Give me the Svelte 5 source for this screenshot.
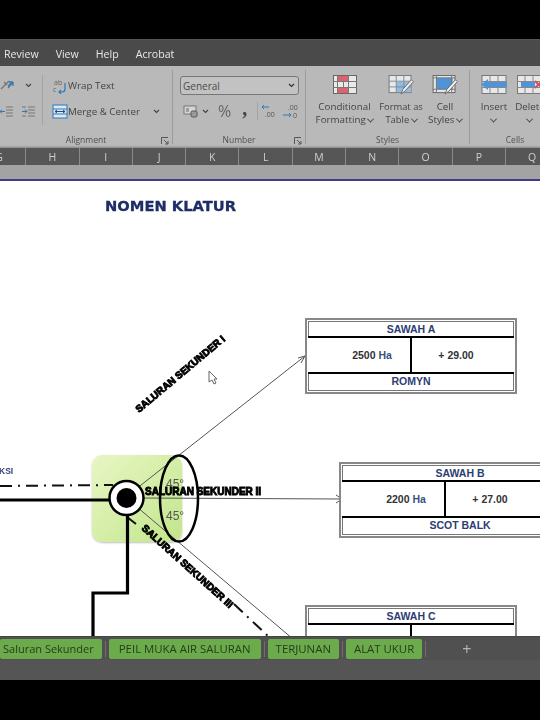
<script>
  const menus = ['Review', 'View', 'Help', 'Acrobat'];
  const cols = ['G', 'H', 'I', 'J', 'K', 'L', 'M', 'N', 'O', 'P', 'Q'];
  const tabs = ['Saluran Sekunder', 'PEIL MUKA AIR SALURAN', 'TERJUNAN', 'ALAT UKUR'];
  const sawah = [
    { cls: 'a', name: 'SAWAH A', area: '2500', level: '+ 29.00', type: 'ROMYN' },
    { cls: 'b', name: 'SAWAH B', area: '2200', level: '+ 27.00', type: 'SCOT BALK' },
    { cls: 'c', name: 'SAWAH C', area: '', level: '', type: '' }
  ];
</script>

<div class="screen">
  <div class="bar-black top"></div>

  <div class="menu">
    {#each menus as m}
      <span>{m}</span>
    {/each}
  </div>

  <div class="ribbon">
    <section class="group align">
      <div class="align-body">
        <div class="align-icons">
          <div class="icon-row">
            <svg width="22" height="16" viewBox="0 0 22 16"><path d="M1 12 L9 4 M4 5l3 3M8 9l3-3" stroke="#777" fill="none" stroke-width="1.4"/><path d="M8 11 L13 5M13 5h-4M13 5v4" stroke="#2f78b8" fill="none" stroke-width="1.3"/></svg>
            <svg class="chev" width="7" height="5" viewBox="0 0 7 5"><path d="M1 1l2.500 2.500L6 1" stroke="#444" fill="none" stroke-width="1.100"/></svg>
          </div>
          <div class="icon-row two">
            <svg width="13" height="11" viewBox="0 0 13 11"><path d="M6 1h7M6 4h7M6 7h7M6 10h7" stroke="#777"/><path d="M5 5.500H0M2 3.500l-2 2 2 2" stroke="#2f78b8" fill="none"/></svg>
            <svg width="13" height="11" viewBox="0 0 13 11"><path d="M6 1h7M6 4h7M6 7h7M6 10h7M0 1h4M0 10h4" stroke="#777"/><path d="M0 5.500h5M3 3.500l2 2-2 2" stroke="#2f78b8" fill="none"/></svg>
          </div>
        </div>
        <div class="divider"></div>
        <div class="wrap-col">
          <div class="cmd">
            <svg width="16" height="16" viewBox="0 0 16 16"><text x="2" y="7" class="ab">ab</text><text x="1" y="14" class="ab">c</text><path d="M13 5v6a3 3 0 0 1-3 3H7M9 12l-2 2 2 2" stroke="#2f78b8" fill="none" stroke-width="1.200"/></svg>
            <span>Wrap Text</span>
          </div>
          <div class="cmd">
            <svg width="16" height="15" viewBox="0 0 16 15"><rect x="1" y="1" width="14" height="13" fill="#dce9f4" stroke="#2f78b8"/><path d="M1 5h14M1 10h14" stroke="#2f78b8"/><path d="M3 7.500h10M5 6l-2 1.500L5 9M11 6l2 1.500L11 9" stroke="#1f4f80" fill="none"/></svg>
            <span>Merge &amp; Center</span>
            <svg class="chev merge-chev" width="7" height="5" viewBox="0 0 7 5"><path d="M1 1l2.500 2.500L6 1" stroke="#444" fill="none" stroke-width="1.100"/></svg>
          </div>
        </div>
      </div>
      <div class="caption">
        <span>Alignment</span>
        <svg class="launch" width="8" height="8" viewBox="0 0 8 8"><path d="M.5 7V.5H7M3 3l4 4M7 4v3H4" stroke="#555" fill="none"/></svg>
      </div>
    </section>

    <section class="group number">
      <div class="select"><span>General</span><svg width="7" height="5" viewBox="0 0 7 5"><path d="M1 1l2.500 2.500L6 1" stroke="#333" fill="none" stroke-width="1.200"/></svg></div>
      <div class="num-row">
        <svg width="16" height="14" viewBox="0 0 16 14"><rect x="1" y="2" width="12" height="8" fill="#d5d5d5" stroke="#777"/><rect x="8" y="7" width="6" height="6" rx="1.500" fill="#9a9a9a" stroke="#555"/><path d="M3 5h3M3 7h3" stroke="#666"/></svg>
        <svg class="chev" width="7" height="5" viewBox="0 0 7 5"><path d="M1 1l2.500 2.500L6 1" stroke="#444" fill="none" stroke-width="1.100"/></svg>
        <span class="pct">%</span>
        <span class="comma">,</span>
        <i class="mini-sep"></i>
        <svg width="16" height="14" viewBox="0 0 16 14"><path d="M8 3H1M3 1L1 3l2 2" stroke="#2f78b8" fill="none"/><text x="4" y="13" class="dec">.00</text></svg>
        <svg class="dec-more" width="16" height="16" viewBox="0 0 16 16"><text x="5" y="7" class="dec">.00</text><path d="M0 12h8M6 10l2 2-2 2" stroke="#2f78b8" fill="none"/><text x="10" y="15" class="dec">0</text></svg>
      </div>
      <div class="caption">
        <span>Number</span>
        <svg class="launch" width="8" height="8" viewBox="0 0 8 8"><path d="M.5 7V.5H7M3 3l4 4M7 4v3H4" stroke="#555" fill="none"/></svg>
      </div>
    </section>

    <section class="group styles">
      <div class="big-row">
        <div class="big cond">
          <svg width="24" height="20" viewBox="0 0 24 20"><rect x=".5" y=".5" width="23" height="18" fill="#e9e9e9" stroke="#666"/><rect x="4" y="1" width="11" height="6" fill="#d9646e"/><rect x="4" y="12" width="11" height="6" fill="#d9646e"/><path d="M0 6.500h24M0 12.500h24M4.500 0v19M10.500 7v5M15.500 0v19" stroke="#777"/></svg>
          <span>Conditional<br />Formatting <b class="v"></b></span>
        </div>
        <div class="big table">
          <svg width="26" height="20" viewBox="0 0 26 21"><rect x=".5" y=".5" width="23" height="18" fill="#e4e9ee" stroke="#777"/><rect x="8" y="7" width="15" height="11" fill="#8dbde6"/><path d="M0 6.500h24M0 12.500h24M8 0v19M16 0v19" stroke="#888"/><path d="M13 20l2-5 9-10 2 2-9 10z" fill="#f2f2f2" stroke="#666"/></svg>
          <span>Format as<br />Table <b class="v"></b></span>
        </div>
        <div class="big cell">
          <svg width="26" height="20" viewBox="0 0 26 21"><rect x=".5" y=".5" width="23" height="18" fill="#e4e4e4" stroke="#666"/><rect x="4" y="3" width="17" height="12" fill="#4f94d8"/><path d="M4 0v19M20 0v19M0 3h24M0 15h24" stroke="#777"/><path d="M13 20l2-5 9-10 2 2-9 10z" fill="#f2f2f2" stroke="#666"/></svg>
          <span>Cell<br />Styles <b class="v"></b></span>
        </div>
      </div>
      <div class="caption"><span>Styles</span></div>
    </section>

    <section class="group cells">
      <div class="big-row">
        <div class="big insert">
          <svg width="27" height="20" viewBox="0 0 27 20"><rect x="1" y=".5" width="24" height="18" fill="#e8e8e8" stroke="#777"/><path d="M9 0v19M17 0v19M1 6.500h24M1 12.500h24" stroke="#888"/><path d="M0 9.500L7 4v3h19v5H7v3z" fill="#4f94d8"/></svg>
          <span>Insert<br /><b class="v"></b></span>
        </div>
        <div class="big del">
          <svg width="27" height="20" viewBox="0 0 27 20"><rect x=".5" y=".5" width="24" height="18" fill="#e8e8e8" stroke="#777"/><path d="M8 0v19M16 0v19M0 6.500h25M0 12.500h25" stroke="#888"/><rect x="4" y="7" width="14" height="5" fill="#4f94d8"/><path d="M18 6l7 7M25 6l-7 7" stroke="#c9565c" stroke-width="2"/></svg>
          <span>Delete<br /><b class="v"></b></span>
        </div>
      </div>
      <div class="caption"><span>Cells</span></div>
    </section>
  </div>

  <div class="headers">
    {#each cols as c}
      <span>{c}</span>
    {/each}
  </div>
  <div class="strip"></div>

  <div class="sheet">
    <h1>NOMEN KLATUR</h1>

    <div class="green"></div>

    <svg class="diagram" width="540" height="455" viewBox="0 181 540 455">
      <g class="thin">
        <path d="M136 489 L305 356" />
        <path d="M298 358 L305 356 L301 363" />
        <path d="M137 498 L342 499" />
        <path d="M336 495 L342 499 L336 503" />
        <path d="M137 507 L293 639" />
      </g>
      <path class="dash" d="M0 486 L113 485" />
      <path class="dash" d="M127 517 L136 524 M234 604 L270 638" />
      <path class="thick" d="M0 500 H112" />
      <path class="thick" d="M127.500 514 V593 H93 V640" />
      <ellipse cx="179" cy="498.500" rx="19" ry="43" class="ring" />
      <circle cx="126.500" cy="498" r="17" class="hub" />
      <circle cx="126.500" cy="498" r="10" fill="#000" />
      <text x="166" y="488" class="deg">45°</text>
      <text x="166" y="520" class="deg">45°</text>
      <text x="-1" y="474" class="ksi">KSI</text>
      <text x="145" y="495" class="label">SALURAN SEKUNDER II</text>
      <text x="0" y="0" class="label" transform="translate(141 529) rotate(42)">SALURAN SEKUNDER III</text>
      <text x="0" y="0" class="label" transform="translate(139 413) rotate(-40)">SALURAN SEKUNDER I</text>
      <path class="cursor" d="M209 371 V382 L212 380 L214 384 L216 383 L214 379 L217 379 Z" />
    </svg>

    {#each sawah as s}
      <div class="node {s.cls}">
        <div class="node-head">{s.name}</div>
        <div class="node-mid">
          <div class="node-area">{s.area}{#if s.area}&nbsp;<em>Ha</em>{/if}</div>
          <div class="node-level">{s.level}</div>
        </div>
        <div class="node-foot">{s.type}</div>
      </div>
    {/each}
  </div>

  <div class="tabs">
    {#each tabs as t}
      <span class="tab">{t}</span>
      <i class="tab-sep"></i>
    {/each}
    <span class="plus">+</span>
  </div>
  <div class="status"></div>
  <div class="bar-black bottom"></div>
</div>

<style>
  :global(body) {
    margin: 0;
    background: #000;
  }

  .screen {
    width: 540px;
    height: 720px;
    overflow: hidden;
    display: flex;
    flex-direction: column;
    font-family: "Open Sans", "Noto Sans", sans-serif;
    filter: blur(0.35px);
  }

  .bar-black {
    background: #000;
    flex: none;
  }
  .top { height: 39px; }
  .bottom { height: 40px; }

  .menu {
    flex: none;
    height: 27px;
    background: #4a4a4a;
    border-top: 1px solid #555;
    box-sizing: border-box;
    display: flex;
    align-items: center;
    gap: 17px;
    padding: 2px 0 0 4px;
    color: #e8e8e8;
    font-size: 10.600px;
  }

  .ribbon {
    flex: none;
    height: 82px;
    background: #b9b9b9;
    display: flex;
    color: #444;
    font-size: 10px;
    overflow: hidden;
  }

  .group {
    flex: none;
    box-sizing: border-box;
    position: relative;
    margin: 4px 0;
    border-right: 1px solid #9c9c9c;
    display: flex;
    flex-direction: column;
  }
  .align { width: 173px; }
  .number { width: 133px; }
  .styles { width: 164px; }
  .cells { width: 90px; border-right: 0; }

  .caption {
    position: absolute;
    left: 0;
    right: 0;
    bottom: -2px;
    height: 14px;
    display: flex;
    justify-content: center;
    align-items: center;
    font-size: 8.500px;
    color: #505050;
  }
  .launch {
    position: absolute;
    right: 3px;
    bottom: 1px;
  }

  .align-body {
    display: flex;
    padding-top: 7px;
  }
  .align-icons {
    width: 42px;
    display: flex;
    flex-direction: column;
    gap: 10px;
  }
  .icon-row {
    display: flex;
    align-items: center;
    gap: 3px;
    height: 16px;
  }
  .icon-row.two {
    gap: 9px;
    margin-left: -12px;
    padding-left: 12px;
  }
  .chev { flex: none; }
  .divider {
    width: 1px;
    height: 50px;
    margin-top: -2px;
    background: #a3a3a3;
    margin-right: 9px;
  }
  .wrap-col {
    display: flex;
    flex-direction: column;
    gap: 9px;
  }
  .cmd {
    display: flex;
    align-items: center;
    gap: 0;
    height: 17px;
    font-size: 9.800px;
    width: 108px;
    white-space: nowrap;
  }
  .merge-chev { margin-left: auto; }
  .ab {
    font: 7px "Open Sans", sans-serif;
    fill: #666;
  }

  .number .select {
    margin: 6px 0 0 7px;
    width: 119px;
    height: 19px;
    box-sizing: border-box;
    border: 1px solid #777;
    border-radius: 3px;
    background: #c2c2c2;
    display: flex;
    align-items: center;
    justify-content: space-between;
    padding: 0 3px 0 2px;
    font-size: 10px;
    color: #4a4a4a;
  }
  .num-row {
    display: flex;
    align-items: center;
    gap: 3px;
    margin: 6px 0 0 10px;
    height: 20px;
  }
  .pct {
    font-size: 16px;
    color: #666;
    margin-left: 6px;
    line-height: 1;
  }
  .comma {
    font: bold 20px/12px "Liberation Serif", serif;
    color: #444;
    margin: -6px 7px 0 8px;
  }
  .mini-sep {
    width: 1px;
    height: 18px;
    background: #a3a3a3;
  }
  .dec-more { margin-left: 3px; }
  .dec {
    font: 7px "Open Sans", sans-serif;
    fill: #555;
  }

  .big-row {
    display: flex;
    padding-top: 5px;
  }
  .big {
    display: flex;
    flex-direction: column;
    align-items: center;
    flex: none;
    text-align: center;
    line-height: 13px;
    font-size: 9.800px;
    white-space: nowrap;
  }
  .big svg {
    display: block;
    margin-bottom: 5px;
  }
  .cond { width: 75px; margin-left: 1px; }
  .table { width: 50px; margin-left: -6px; font-size: 9.400px; }
  .cell { width: 38px; }
  .insert { width: 38px; margin-left: 5px; }
  .del { width: 34px; }
  .v {
    display: inline-block;
    width: 4px;
    height: 4px;
    border: solid #444;
    border-width: 0 1px 1px 0;
    transform: rotate(45deg) translate(-1px, -1px);
  }

  .headers {
    flex: none;
    height: 17px;
    background: #565656;
    display: flex;
    margin-left: -27px;
    box-shadow: 0 -1px 2px rgba(0, 0, 0, 0.3);
  }
  .headers span {
    flex: none;
    width: 53.300px;
    box-sizing: border-box;
    border-right: 1px solid #8a8a8a;
    text-align: center;
    color: #cfcfcf;
    font-size: 10.500px;
    line-height: 18px;
  }

  .strip {
    flex: none;
    height: 14px;
    background: #a3a3a3;
    border-bottom: 2px solid #3f3a8c;
  }

  .sheet {
    flex: none;
    height: 455px;
    background: #fff;
    position: relative;
    overflow: hidden;
  }

  h1 {
    margin: 0;
    position: absolute;
    left: 105px;
    top: 16px;
    font: 900 14.700px/18px "DejaVu Sans", sans-serif;
    -webkit-text-stroke: 0.3px #1d2d66;
    color: #1d2d66;
  }

  .green {
    position: absolute;
    left: 92px;
    top: 274px;
    width: 90px;
    height: 87px;
    border-radius: 10px;
    background: linear-gradient(135deg, #e8f6c4, #c2e68c);
    box-shadow: 0 1px 2px rgba(0, 0, 0, 0.25);
  }

  .diagram {
    position: absolute;
    left: 0;
    top: 0;
  }
  .thin path {
    stroke: #555;
    stroke-width: 1;
    fill: none;
  }
  .dash {
    stroke: #111;
    stroke-width: 2;
    fill: none;
    stroke-dasharray: 12 6 2 6;
  }
  .thick {
    stroke: #000;
    stroke-width: 3.200;
    fill: none;
  }
  .ring {
    fill: none;
    stroke: #000;
    stroke-width: 2.500;
  }
  .hub {
    fill: #fff;
    stroke: #000;
    stroke-width: 2.500;
  }
  .deg {
    font: 12px "Liberation Sans", sans-serif;
    fill: #555;
  }
  .ksi {
    font: bold 8.500px "Liberation Sans", sans-serif;
    fill: #33457a;
  }
  .label {
    font: bold 10px "Liberation Sans", sans-serif;
    fill: #000;
    stroke: #000;
    stroke-width: 0.900;
  }
  .cursor {
    fill: #fff;
    stroke: #666;
  }

  .node {
    position: absolute;
    width: 212px;
    height: 76px;
    box-sizing: border-box;
    border: 2px solid #888;
    padding: 1px;
    background: #fff;
    font-family: "Liberation Sans", sans-serif;
    font-weight: bold;
    font-size: 10.500px;
  }
  .node > * {
    box-sizing: border-box;
  }
  .a { left: 305px; top: 137px; }
  .b { left: 339px; top: 281px; }
  .c { left: 305px; top: 424px; }
  .b .node-head, .b .node-foot {
    padding-left: 30px;
  }

  .node-head, .node-foot {
    height: 15px;
    line-height: 14px;
    text-align: center;
    color: #2d3c72;
    border: solid #777;
    border-width: 1px 1px 0;
  }
  .node-foot {
    height: 17px;
    border-width: 0 1px 1px;
  }
  .node-mid {
    display: grid;
    grid-template-columns: 104px 1fr;
    height: 38px;
    border: solid #000;
    border-width: 2px 0;
    line-height: 34px;
    color: #333;
    text-align: center;
  }
  .node-area {
    border-right: 2px solid #000;
    padding-left: 26px;
  }
  .node-area em {
    font-style: normal;
    color: #35517f;
  }
  .node-level {
    padding-right: 14px;
  }

  .tabs {
    flex: none;
    height: 24px;
    background: #505050;
    border-top: 1px solid #444;
    box-sizing: border-box;
    display: flex;
    align-items: center;
    font-size: 11.400px;
    color: #263d1c;
  }
  .tab {
    flex: none;
    height: 20px;
    line-height: 20px;
    background: #6bab4b;
    border-radius: 2px;
    padding: 0 8px;
    margin-top: 1px;
    white-space: nowrap;
  }
  .tab:first-child {
    padding: 0 8px 0 3px;
    font-size: 11px;
  }
  .tab:nth-child(3) {
    padding: 0 10px;
  }
  .tab-sep {
    flex: none;
    width: 1px;
    height: 16px;
    background: #6e6e6e;
    margin: 0 3px;
  }
  .plus {
    margin-left: 33px;
    color: #b5b5b5;
    font-size: 16px;
  }

  .status {
    flex: none;
    height: 20px;
    background: #555;
  }
</style>
